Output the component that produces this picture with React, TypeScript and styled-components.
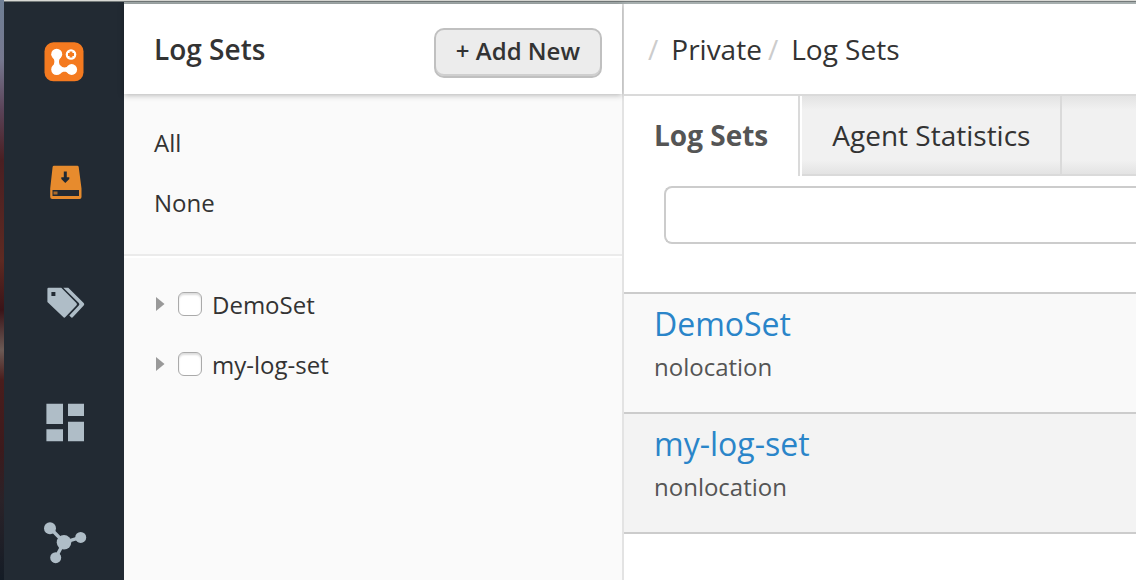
import React from "react";
import styled, { createGlobalStyle, css } from "styled-components";

const GlobalStyle = createGlobalStyle`
  *, *::before, *::after { box-sizing: border-box; }
  body {
    margin: 0;
    background: #fff;
    color: #333;
    font-family: "Open Sans", "Noto Sans", sans-serif;
    font-size: 24px;
    line-height: 32px;
  }
  button, input { font: inherit; color: inherit; }
`;

const Desktop = styled.div`
  display: flex;
  height: 100vh;
  overflow: hidden;
  padding-left: 4px;
  background: linear-gradient(#6f7f95 0, #76788f 60px, #5a4358 110px, #4a1f22 160px, #5e2a22 260px, #3a1418 310px, #6b5a55 350px, #4a1d1c 380px, #3c1a1c 450px, #2a2228 500px, #141c26 580px);
`;

const Window = styled.div`
  display: flex;
  flex-direction: column;
  flex: 1;
  min-width: 0;
`;

const WindowEdge = styled.div`
  flex: none;
  height: 2px;
  background: #d9d9d5;
  border-bottom: 1px solid #747a7a;
`;

const Columns = styled.div`
  display: flex;
  flex: 1;
  min-height: 0;
`;

const Sidebar = styled.nav`
  display: flex;
  flex-direction: column;
  flex: 0 0 120px;
  overflow: hidden;
  background: #222a33;
`;

const SideLink = styled.a`
  display: flex;
  flex: 0 0 120px;
  align-items: center;
  justify-content: center;
  color: #afbdc7;
`;

const Body = styled.div`
  display: flex;
  flex: 1;
  min-width: 0;
  border-top: 2px solid #a7afaf;
`;

const Panel = styled.aside`
  display: flex;
  flex-direction: column;
  flex: 0 0 500px;
  background: #fafafa;
  border-right: 2px solid #e3e3e3;
`;

const PanelHeader = styled.header`
  display: flex;
  align-items: flex-start;
  justify-content: space-between;
  height: 90px;
  padding: 24px 20px 0 30px;
  background: #fff;
  box-shadow: 0 1px 6px rgba(0, 0, 0, 0.3);
`;

const PanelTitle = styled.h1`
  margin: 0;
  font-size: 28px;
  font-weight: 600;
  line-height: 42px;
`;

const AddButton = styled.button`
  height: 50px;
  padding: 0 20px 4px;
  font-weight: 600;
  background: #ececec;
  border: 2px solid #c0c0c0;
  border-radius: 10px;
  box-shadow: inset 0 -2px #cfcfcf;
`;

const Filters = styled.div`
  display: flex;
  flex-direction: column;
  padding: 20px 0;
  border-bottom: 2px solid #ebebeb;
  box-shadow: 0 2px #fff;
`;

const FilterButton = styled.button`
  height: 60px;
  padding: 0 30px 2px;
  text-align: left;
  background: none;
  border: 0;
`;

const SetTree = styled.ul`
  margin: 0;
  padding: 18px 30px;
  list-style: none;
`;

const SetItem = styled.li`
  display: flex;
  align-items: center;
  height: 60px;
`;

const Expander = styled.button`
  display: flex;
  width: 24px;
  padding: 0 0 0 2px;
  background: none;
  border: 0;
`;

const CheckLabel = styled.label`
  display: flex;
  align-items: center;
  gap: 10px;
`;

const Checkbox = styled.input`
  appearance: none;
  width: 24px;
  height: 24px;
  margin: 0;
  background: #fff;
  border: 1px solid #aaa;
  border-radius: 6px;
  box-shadow: inset 0 2px 2px #ddd;
`;

const CheckText = styled.span`
  padding-top: 2px;
`;

const Main = styled.main`
  flex: 1;
  min-width: 0;
  overflow: hidden;
  background: #fff;
`;

const Breadcrumb = styled.nav`
  display: flex;
  align-items: center;
  height: 92px;
  padding: 0 24px;
  font-size: 28px;
  line-height: 40px;
  border-bottom: 2px solid #dadada;
`;

const Slash = styled.span`
  margin-right: 13px;
  color: #ccc;
`;

const Crumb = styled.a`
  margin-right: 6px;
  color: inherit;
  text-decoration: none;
`;

const Tabs = styled.div`
  display: flex;
  height: 80px;
`;

const Tab = styled.button<{ $active?: boolean }>`
  padding: 0 30px;
  font-size: 28px;
  border: 0;
  border-right: 2px solid #dadada;
  ${({ $active }) =>
    $active
      ? css`
          margin-right: 2px;
          padding-bottom: 2px;
          font-weight: 700;
          color: #555;
          background: #fff;
        `
      : css`
          background: linear-gradient(#e3e3e3, #f1f1f1 14px, #f1f1f1 64px, #e3e3e3);
          border-bottom: 2px solid #dadada;
        `}
`;

const TabFiller = styled.div`
  flex: 1;
  background: linear-gradient(#e3e3e3, #f1f1f1 14px, #f1f1f1 64px, #e3e3e3);
  border-bottom: 2px solid #dadada;
`;

const SearchRow = styled.div`
  display: flex;
  padding: 10px 0 48px 40px;
`;

const SearchInput = styled.input`
  flex: 1;
  min-width: 0;
  height: 58px;
  padding: 0 16px;
  background: #fff;
  border: 2px solid #ccc;
  border-right: 0;
  border-radius: 8px 0 0 8px;
`;

const SetList = styled.ul`
  margin: 0;
  padding: 0;
  list-style: none;
  border-top: 2px solid #ccc;
`;

const SetRow = styled.li`
  height: 120px;
  padding: 8px 30px;
  background: #f9f9f9;
  border-bottom: 2px solid #ccc;
  &:nth-child(even) { background: #f3f3f3; }
`;

const SetName = styled.a`
  display: block;
  font-size: 32px;
  line-height: 44px;
  color: #2a85c9;
  text-decoration: none;
`;

const SetLocation = styled.p`
  margin: 4px 0 0;
  line-height: 34px;
  color: #555;
`;

const Icon = ({ children }: { children: React.ReactNode }) => (
  <svg width="48" height="48" viewBox="0 0 48 48" fill="currentColor" aria-hidden="true">
    {children}
  </svg>
);

const LogoIcon = () => (
  <Icon>
    <rect x="4.5" y="4.3" width="39" height="39" rx="9" fill="#f47a20" />
    <g fill="#fff">
      <circle cx="16.7" cy="16.2" r="5.5" />
      <circle cx="16.7" cy="31.5" r="5.5" />
      <circle cx="31.7" cy="31.5" r="5.4" />
      <path d="M12.500 19c2.500 3 2.500 6 0 10h8.400c-2.500-4-2.500-7 0-10zM20 27.500c3 2.500 6 2.500 9 0v8c-3-2.500-6-2.500-9 0z" />
      <circle cx="31" cy="16.500" r="5.300" />
    </g>
    <path d="M31 13.500v6M28 16.500h6" stroke="#f47a20" strokeWidth="2.800" />
  </Icon>
);

const DriveIcon = () => (
  <Icon>
    <path
      fill="#e78b2d"
      fillRule="evenodd"
      d="M14 7.700h23.200a1.500 1.500 0 0 1 1.500 1.300l2.800 21.500v8.500a2 2 0 0 1-2 2h-27.300a2 2 0 0 1-2-2v-8.500l2.400-21.500a1.500 1.500 0 0 1 1.400-1.300zM12.500 32v6h26.500v-6zM23.800 13.500v5.700h-2.500v1.800l4 4 4-4v-1.800h-2.500v-5.700z"
    />
    <rect x="13.500" y="33.500" width="4" height="3" fill="#a96a2b" />
  </Icon>
);

const TagsIcon = () => (
  <Icon>
    <path
      fillRule="evenodd"
      d="M8.500 9.700h12.800l15.100 15.400q1.200 1.200 0 2.400l-11 11.600q-1.100 1.100-2.200 0l-15.800-15v-13q0-1.400 1.100-1.400zM11.400 14v4h4v-4z"
    />
    <path d="M23.300 9.700h5l15.400 15.400q1.200 1.200 0 2.400l-10.700 11.600q-1.100 1.100-2.200 0l-1.500-1.700 9.500-9.900q1.200-1.200 0-2.400z" />
  </Icon>
);

const DashboardIcon = () => (
  <Icon>
    <path d="M6.400 5.800h16.600v20.200h-16.600zM28 5.800h16v12.200h-16zM6.400 31.300h16.600v12h-16.600zM28 23.700h16v19.600h-16z" />
  </Icon>
);

const NetworkIcon = () => (
  <Icon>
    <path d="M10 10l14 14.300 16.700-5M24 24.300l-8.300 15.400" fill="none" stroke="currentColor" strokeWidth="3.400" />
    <circle cx="24" cy="24.300" r="7.300" />
    <circle cx="10" cy="10.200" r="6" />
    <circle cx="40.700" cy="19.400" r="5.500" />
    <circle cx="15.700" cy="39.700" r="5.500" />
  </Icon>
);

const sections = [
  { label: "Home", Glyph: LogoIcon },
  { label: "Logs", Glyph: DriveIcon },
  { label: "Tags", Glyph: TagsIcon },
  { label: "Dashboards", Glyph: DashboardIcon },
  { label: "Integrations", Glyph: NetworkIcon },
];

const logSets = [
  { name: "DemoSet", location: "nolocation" },
  { name: "my-log-set", location: "nonlocation" },
];

export default function App() {
  return (
    <Desktop>
      <GlobalStyle />
      <Window>
        <WindowEdge />
        <Columns>
          <Sidebar>
            {sections.map(({ label, Glyph }) => (
              <SideLink key={label} href="#" aria-label={label}>
                <Glyph />
              </SideLink>
            ))}
          </Sidebar>
          <Body>
            <Panel>
              <PanelHeader>
                <PanelTitle>Log Sets</PanelTitle>
                <AddButton type="button">+ Add New</AddButton>
              </PanelHeader>
              <Filters>
                <FilterButton type="button">All</FilterButton>
                <FilterButton type="button">None</FilterButton>
              </Filters>
              <SetTree>
                {logSets.map(({ name }) => (
                  <SetItem key={name}>
                    <Expander type="button" aria-label={`Expand ${name}`}>
                      <svg width="9" height="14" viewBox="0 0 9 14" aria-hidden="true">
                        <path d="M0 0l8.500 7-8.500 7z" fill="#999" />
                      </svg>
                    </Expander>
                    <CheckLabel>
                      <Checkbox type="checkbox" />
                      <CheckText>{name}</CheckText>
                    </CheckLabel>
                  </SetItem>
                ))}
              </SetTree>
            </Panel>
            <Main>
              <Breadcrumb aria-label="Breadcrumb">
                <Slash>/</Slash>
                <Crumb href="#">Private</Crumb>
                <Slash>/</Slash>
                <Crumb href="#">Log Sets</Crumb>
              </Breadcrumb>
              <Tabs role="tablist">
                <Tab type="button" role="tab" aria-selected="true" $active>
                  Log Sets
                </Tab>
                <Tab type="button" role="tab" aria-selected="false">
                  Agent Statistics
                </Tab>
                <TabFiller />
              </Tabs>
              <SearchRow>
                <SearchInput type="text" aria-label="Search log sets" />
              </SearchRow>
              <SetList>
                {logSets.map(({ name, location }) => (
                  <SetRow key={name}>
                    <SetName href="#">{name}</SetName>
                    <SetLocation>{location}</SetLocation>
                  </SetRow>
                ))}
              </SetList>
            </Main>
          </Body>
        </Columns>
      </Window>
    </Desktop>
  );
}
